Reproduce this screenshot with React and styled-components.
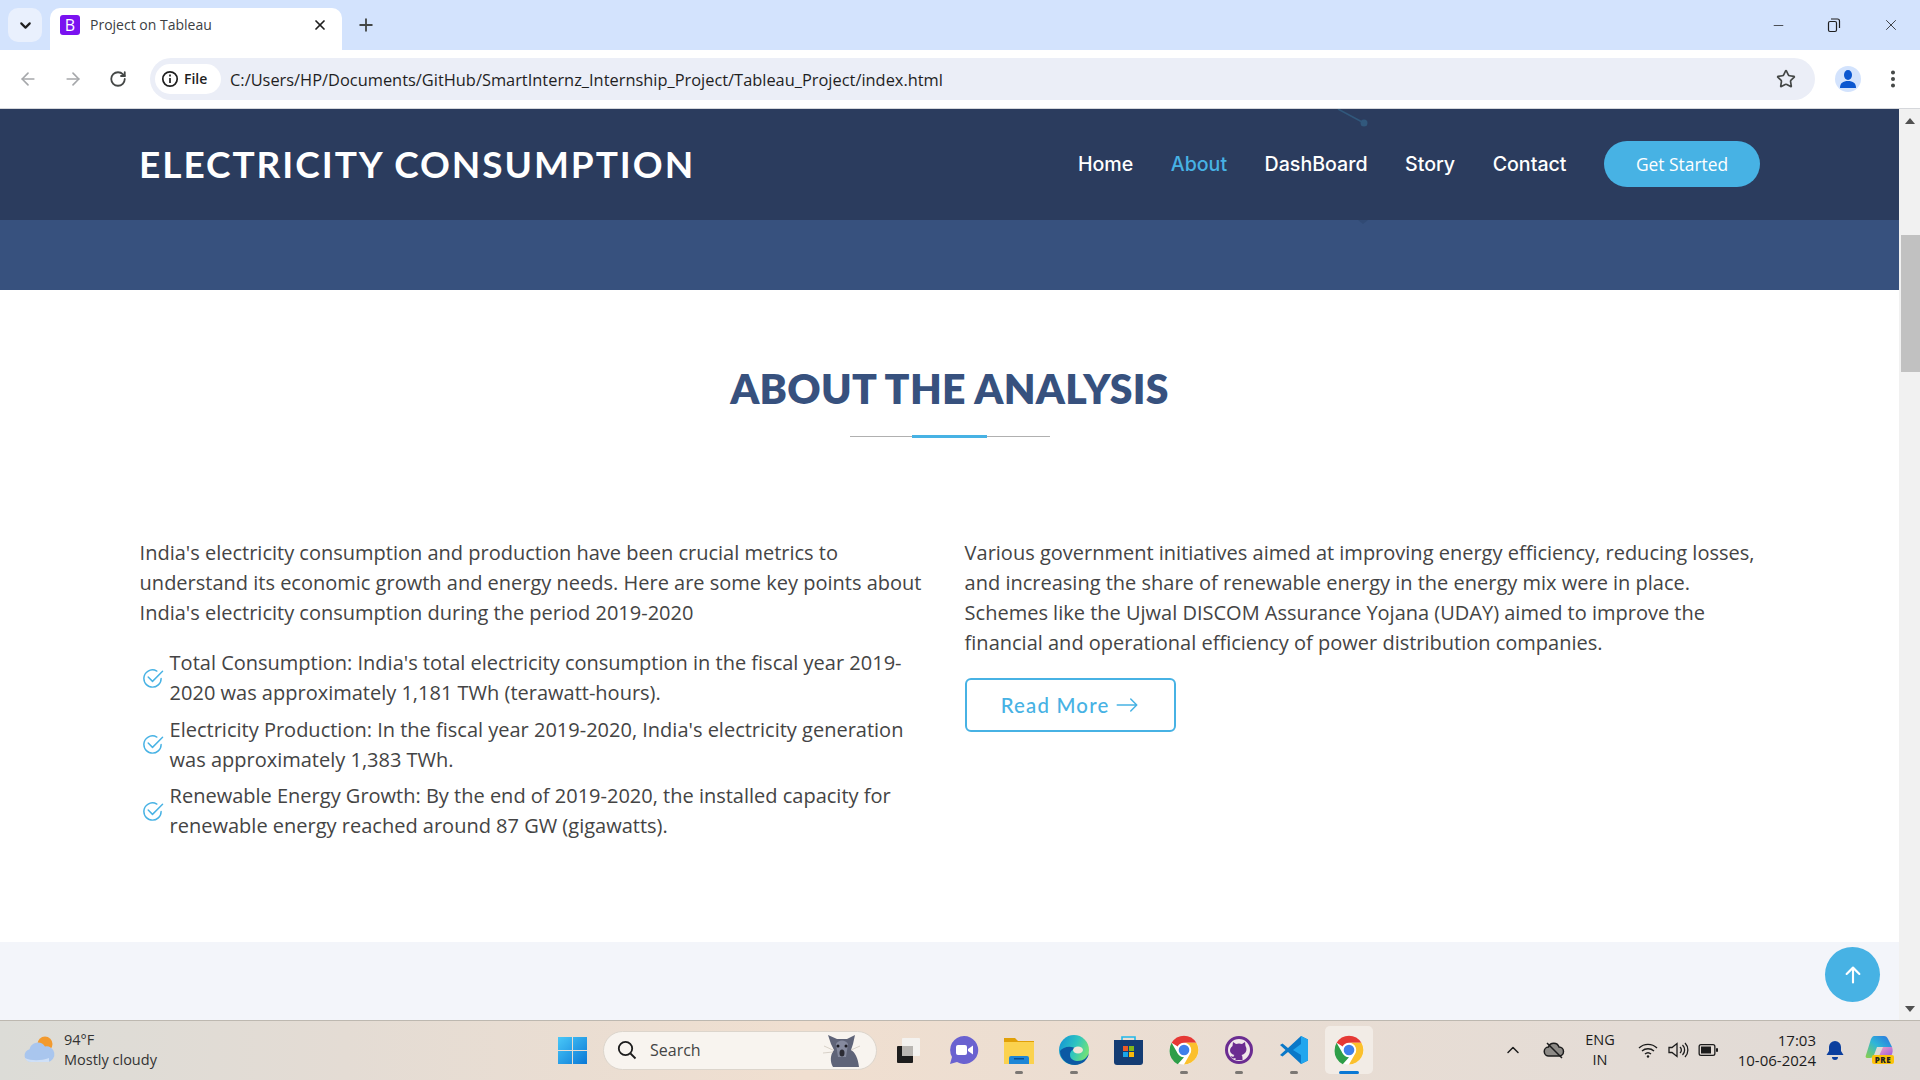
import React from "react";
import styled, { createGlobalStyle } from "styled-components";
import { BsArrowRight, BsArrowUpShort, BsCheck2Circle } from "react-icons/bs";
import { ArrowLeft, ArrowRight, ChevronDown, ChevronUp, EllipsisVertical, Minus, Plus, RotateCw, Star, X } from "lucide-react";

const GlobalStyle = createGlobalStyle`
  html, body { margin: 0; padding: 0; height: 100%; overflow: hidden; }
  body { font-family: "Open Sans", sans-serif; color: #444444; background: #fff; }
  * { box-sizing: border-box; }
`;

const Screen = styled.div`
  width: 1920px;
  height: 1080px;
  display: flex;
  flex-direction: column;
  overflow: hidden;
`;

/* browser chrome */
const TabStrip = styled.div`
  height: 50px;
  flex: none;
  background: #d3e3fd;
  display: flex;
  align-items: flex-end;
  padding-left: 8px;
`;
const TabMenu = styled.div`
  width: 34px;
  height: 34px;
  margin-bottom: 8px;
  border-radius: 10px;
  background: #e9f0fd;
  display: flex;
  align-items: center;
  justify-content: center;
  color: #1f1f1f;
`;
const Tab = styled.div`
  width: 292px;
  height: 42px;
  margin-left: 8px;
  background: #fff;
  border-radius: 10px 10px 0 0;
  display: flex;
  align-items: center;
  padding: 0 14px 9px 10px;
  font-size: 14px;
  color: #3c4043;
`;
const Favicon = styled.div`
  width: 20px;
  height: 20px;
  flex: none;
  border-radius: 3px;
  background: #7a12f0;
  color: #fff;
  font-size: 16px;
  line-height: 20px;
  text-align: center;
  margin-right: 10px;
`;
const TabTitle = styled.span`
  flex: 1;
`;
const NewTab = styled.div`
  margin: 0 0 12px 14px;
  height: 26px;
  display: flex;
  align-items: center;
  color: #444746;
`;
const WindowButtons = styled.div`
  margin-left: auto;
  height: 50px;
  display: flex;
  align-items: center;
  padding-right: 20px;
  gap: 41px;
  color: #1f1f1f;
`;
const Toolbar = styled.div`
  height: 59px;
  flex: none;
  background: #fff;
  border-bottom: 1px solid #d5d7db;
  display: flex;
  align-items: center;
  padding: 0 0 1px 18px;
  border-radius: 10px 10px 0 0;
`;
const NavIcon = styled.div`
  width: 20px;
  display: flex;
  justify-content: center;
  margin-right: ${(p) => p.$gap || 25}px;
  color: ${(p) => (p.$dim ? "#a6a8ab" : "#444746")};
`;
const AddressBar = styled.div`
  width: 1665px;
  height: 42px;
  margin-left: 4px;
  border-radius: 21px;
  background: #ebeef7;
  display: flex;
  align-items: center;
  padding: 0 19px 0 5px;
`;
const FileChip = styled.div`
  width: 66px;
  height: 30px;
  border-radius: 15px;
  background: #fff;
  display: flex;
  align-items: center;
  padding-left: 6px;
  gap: 5px;
  font-size: 14px;
  font-weight: 600;
  color: #1f1f1f;
`;
const Url = styled.span`
  margin-left: 9px;
  padding-top: 1px;
  flex: 1;
  font-size: 16.4px;
  color: #1f1f1f;
  white-space: nowrap;
`;
const Avatar = styled.div`
  width: 26px;
  height: 26px;
  margin-left: 20px;
  border-radius: 50%;
  background: #d3e3fd;
  display: flex;
  align-items: center;
  justify-content: center;
`;
const MenuDots = styled.div`
  margin-left: 21px;
  display: flex;
  color: #444746;
`;

/* page */
const Viewport = styled.div`
  flex: 1;
  min-height: 0;
  display: flex;
`;
const Page = styled.div`
  flex: 1;
  min-width: 0;
  display: flex;
  flex-direction: column;
  background: #fff;
`;
const Header = styled.header`
  position: relative;
  height: 111px;
  flex: none;
  background: #2b3c5e;
  display: flex;
  align-items: center;
  padding: 0 139px 2px;
`;
const Logo = styled.h1`
  margin: 0;
  font-family: "Lato", sans-serif;
  font-size: 37px;
  font-weight: 700;
  letter-spacing: 1.95px;
  color: #fff;
  white-space: nowrap;
`;
const NavLinks = styled.nav`
  margin-left: auto;
  display: flex;
  align-items: center;
  gap: 37.5px;
`;
const NavItem = styled.a`
  font-family: "Inter", sans-serif;
  font-size: 19.6px;
  font-weight: 500;
  color: ${(p) => (p.$active ? "#47b2e4" : "#fff")};
`;
const GetStarted = styled.a`
  width: 156px;
  height: 46px;
  border-radius: 23px;
  background: #47b2e4;
  color: #fff;
  font-size: 17.4px;
  font-weight: 500;
  display: flex;
  align-items: center;
  justify-content: center;
`;
const Decor = styled.svg`
  position: absolute;
  left: 1320px;
  top: 0;
  pointer-events: none;
`;
const HeroBand = styled.div`
  position: relative;
  height: 70px;
  flex: none;
  background: #37517e;
  &::before {
    content: "";
    position: absolute;
    left: 1358px;
    top: 0;
    border-left: 5px solid transparent;
    border-right: 5px solid transparent;
    border-top: 4px solid #314a74;
  }
`;
const About = styled.section`
  height: 652px;
  flex: none;
  padding: 64px 139px 0;
`;
const SectionTitle = styled.h2`
  margin: 0;
  text-align: center;
  font-family: "Lato", sans-serif;
  font-size: 41px;
  line-height: 70px;
  font-weight: 800;
  color: #37517e;
  text-transform: uppercase;
  letter-spacing: 0.3px;
`;
const TitleRule = styled.div`
  position: relative;
  width: 200px;
  height: 1px;
  margin: 12px auto 0;
  background: #b0b0b0;
  &::after {
    content: "";
    position: absolute;
    left: 62px;
    top: -1px;
    width: 75px;
    height: 3px;
    background: #47b2e4;
  }
`;
const Columns = styled.div`
  display: grid;
  grid-template-columns: 784px 796px;
  column-gap: 41px;
  margin-top: 101px;
  padding-left: 0.6px;
  font-size: 20px;
  line-height: 30px;
`;
const Para = styled.p`
  margin: 0;
`;
const CheckList = styled.ul`
  list-style: none;
  margin: 20px 0 0;
  padding: 0;
  display: flex;
  flex-direction: column;
  gap: 6.6px;
`;
const CheckItem = styled.li`
  display: flex;
  align-items: center;
  gap: 6px;
  padding-left: 1px;
  svg {
    flex: none;
    color: #47b2e4;
  }
`;
const ReadMore = styled.a`
  width: 211px;
  height: 54px;
  margin-top: 20px;
  border: 2px solid #47b2e4;
  border-radius: 6px;
  display: flex;
  align-items: center;
  justify-content: center;
  gap: 6px;
  color: #47b2e4;
  font-family: "Lato", sans-serif;
  font-size: 20.4px;
  font-weight: 500;
  letter-spacing: 1.2px;
`;
const GreySection = styled.div`
  position: relative;
  flex: 1;
  background: #f3f5fa;
`;
const ScrollTop = styled.a`
  position: absolute;
  right: 19px;
  top: 5px;
  width: 55px;
  height: 55px;
  border-radius: 50%;
  background: #47b2e4;
  color: #fff;
  display: flex;
  align-items: center;
  justify-content: center;
`;
const Scrollbar = styled.div`
  position: relative;
  width: 21px;
  flex: none;
  background: #f1f1f1;
  display: flex;
  flex-direction: column;
  align-items: center;
  justify-content: space-between;
  padding: 9px 0 8px;
`;
const ScrollArrow = styled.div`
  width: 0;
  height: 0;
  border-left: 5px solid transparent;
  border-right: 5px solid transparent;
  ${(p) => (p.$down ? "border-top: 6px solid #505050;" : "border-bottom: 6px solid #505050;")}
`;
const Thumb = styled.div`
  position: absolute;
  top: 126px;
  right: 0;
  width: 19px;
  height: 137px;
  background: #c1c1c1;
`;

/* taskbar */
const Taskbar = styled.div`
  height: 60px;
  flex: none;
  display: flex;
  align-items: center;
  padding-bottom: 1px;
  border-top: 1px solid #bdb8b0;
  background: linear-gradient(90deg, #dcdcd7 0%, #e4dcd4 18%, #f0dfd0 42%, #e9ddd3 65%, #e4dcd6 85%, #e0dad6 100%);
  color: #1c1c1c;
`;
const Weather = styled.div`
  width: 558px;
  flex: none;
  display: flex;
  align-items: center;
  padding-left: 23px;
  gap: 8px;
  font-size: 14.5px;
  line-height: 20px;
`;
const WeatherText = styled.div`
  color: #333;
`;
const StartIcon = styled.div`
  flex: none;
  width: 29px;
  display: flex;
`;
const SearchBox = styled.div`
  width: 274px;
  height: 39px;
  margin-left: 16px;
  flex: none;
  border-radius: 20px;
  background: #f8f4ef;
  border: 1px solid #dcd5cc;
  display: flex;
  align-items: center;
  padding: 0 14px 0 13px;
  gap: 13px;
  font-size: 16px;
  color: #444;
`;
const SearchLabel = styled.span`
  flex: 1;
`;
const Apps = styled.div`
  display: flex;
  align-items: center;
  margin-left: 4px;
`;
const AppSlot = styled.div`
  position: relative;
  width: ${(p) => (p.$active ? 48 : 55)}px;
  height: 48px;
  margin: 0 ${(p) => (p.$active ? 3.5 : 0)}px;
  display: flex;
  align-items: center;
  justify-content: center;
  border-radius: 5px;
  background: ${(p) => (p.$active ? "#f2ece6" : "transparent")};
  &::after {
    content: "";
    display: ${(p) => (p.$open || p.$active ? "block" : "none")};
    position: absolute;
    bottom: 0;
    left: 50%;
    transform: translateX(-50%);
    width: ${(p) => (p.$active ? 20 : 8)}px;
    height: 3px;
    border-radius: 2px;
    background: ${(p) => (p.$active ? "#0a78d4" : "#7b7773")};
  }
`;
const Tray = styled.div`
  margin-left: auto;
  display: flex;
  align-items: center;
  padding-right: 26px;
`;
const TrayIcon = styled.div`
  display: flex;
  margin-left: ${(p) => p.$gap || 0}px;
`;
const Lang = styled.div`
  width: 36px;
  margin-left: 17px;
  text-align: center;
  font-size: 14.5px;
  line-height: 20px;
`;
const Clock = styled.div`
  width: 84px;
  margin-left: 14px;
  text-align: right;
  font-size: 15px;
  line-height: 20px;
  white-space: nowrap;
`;

const ChromeLogo = ({ size = 30 }) => (
  <svg width={size} height={size} viewBox="0 0 48 48">
    <circle cx="24" cy="24" r="23" fill="#fff" />
    <path d="M24 1a23 23 0 0 1 19.9 11.5H24a11.5 11.5 0 0 0-10 5.8L4.1 12.5A23 23 0 0 1 24 1z" fill="#e53935" />
    <path d="M4.1 12.5 14 29.7a11.5 11.5 0 0 0 10 5.8L14 46.7A23 23 0 0 1 1 24a23 23 0 0 1 3.1-11.5z" fill="#2e9e48" />
    <path d="M43.9 12.5A23 23 0 0 1 24 47l10-17.3A11.5 11.5 0 0 0 24 12.5z" fill="#fbc02d" />
    <circle cx="24" cy="24" r="11" fill="#fff" />
    <circle cx="24" cy="24" r="8.5" fill="#3f80ea" />
  </svg>
);

const WindowsLogo = () => (
  <svg width="29" height="29" viewBox="0 0 29 29">
    <defs>
      <linearGradient id="winA" x1="0" y1="0" x2="1" y2="1">
        <stop offset="0" stopColor="#49c8f8" />
        <stop offset="1" stopColor="#0a78d6" />
      </linearGradient>
    </defs>
    <path d="M0 1h14v13H0zM15 1h14v13H15zM0 15h14v13H0zM15 15h14v13H15z" fill="url(#winA)" />
  </svg>
);

const WeatherIcon = () => (
  <svg width="33" height="28" viewBox="0 0 33 28">
    <circle cx="22" cy="8" r="7.5" fill="#f29a2e" />
    <path d="M8 26a6.500 6.500 0 0 1-1.500-12.800A8.500 8.500 0 0 1 22 10.500a7.500 7.500 0 0 1 3 15.500z" fill="#a9c6ee" />
    <path d="M2 22c6 3 16 3 24 0v4H8a7 7 0 0 1-6-4z" fill="#cfe0f7" />
  </svg>
);

const SearchMascot = () => (
  <svg width="40" height="36" viewBox="0 0 40 36">
    <path d="M6 3l9 4h10l8-4-2 9-2 6c4 2 7 8 8 17H11c-3-5-3-12 1-17l-3-6z" fill="#5f6478" />
    <path d="M14 12a7 7 0 0 1 12 0l-2 13h-8z" fill="#858a9e" />
    <circle cx="16" cy="14" r="1.5" fill="#1b1b22" />
    <circle cx="24" cy="14" r="1.5" fill="#1b1b22" />
    <ellipse cx="20" cy="21" rx="2.500" ry="3.500" fill="#2b2b33" />
    <path d="M2 14l9 4M1 21l10-1M38 14l-9 4" stroke="#cfc8be" strokeWidth="0.8" />
  </svg>
);

const TaskViewIcon = () => (
  <svg width="26" height="28" viewBox="0 0 26 28">
    <rect x="1" y="10" width="16" height="17" rx="1" fill="#1d1d1d" />
    <rect x="6" y="2" width="18" height="18" rx="1" fill="#f4f2ef" />
    <rect x="6" y="10" width="11" height="10" fill="#b9b6b2" />
  </svg>
);

const MeetIcon = () => (
  <svg width="30" height="30" viewBox="0 0 30 30">
    <path d="M15 1a14 14 0 1 1-7 26l-7 2 2-7A14 14 0 0 1 15 1z" fill="#6a62d0" />
    <rect x="7" y="10" width="11" height="10" rx="2" fill="#fff" />
    <path d="M19 14l5-3.500v9L19 16z" fill="#fff" />
  </svg>
);

const FolderIcon = () => (
  <svg width="32" height="28" viewBox="0 0 32 28">
    <path d="M1 2h11l3 3h16v4H1z" fill="#e1a008" />
    <rect x="1" y="6" width="30" height="22" fill="#fbd24e" />
    <path d="M6 28v-6a2 2 0 0 1 2-2h16a2 2 0 0 1 2 2v6z" fill="#1d86d6" />
    <rect x="11" y="22" width="10" height="1.500" fill="#0a4e91" />
  </svg>
);

const EdgeIcon = () => (
  <svg width="30" height="30" viewBox="0 0 30 30">
    <defs>
      <linearGradient id="edgeA" x1="0" y1="0" x2="1" y2="0.400">
        <stop offset="0" stopColor="#1091d8" />
        <stop offset="0.600" stopColor="#2ec5c0" />
        <stop offset="1" stopColor="#6ee07c" />
      </linearGradient>
    </defs>
    <circle cx="15" cy="15" r="15" fill="url(#edgeA)" />
    <path d="M30 18c-1 7-7 12-14 12-8 0-15-6-15-14 3-4 11-6 16-2-3 0-6 2-6 6 0 4 4 6 8 6 5 0 9-3 11-8z" fill="#0c59a4" />
    <ellipse cx="19" cy="15" rx="5" ry="3.500" fill="#f1e4d8" />
  </svg>
);

const StoreIcon = () => (
  <svg width="29" height="30" viewBox="0 0 29 30">
    <path d="M8 6V2h13v4" fill="none" stroke="#22b8ea" strokeWidth="1.600" />
    <path d="M0 5h29v22a3 3 0 0 1-3 3H3a3 3 0 0 1-3-3z" fill="#143c73" />
    <rect x="9" y="11" width="5" height="5" fill="#ee5a25" />
    <rect x="15" y="11" width="5" height="5" fill="#83b81a" />
    <rect x="9" y="17" width="5" height="5" fill="#1aa5e8" />
    <rect x="15" y="17" width="5" height="5" fill="#fbb80a" />
  </svg>
);

const GithubIcon = () => (
  <svg width="28" height="28" viewBox="0 0 28 28">
    <circle cx="14" cy="14" r="12.500" fill="#f0e7ea" stroke="#6b2c91" strokeWidth="3" />
    <path d="M8 6l3 2a9 9 0 0 1 6 0l3-2 .5 4c2 3 1 8-4 9 1 1 1 2 1 5h-7v-2c-3 1-4 0-5-2 1 0 2 1 3 1 0-1 0-1 1-2-5-1-6-6-2-9z" fill="#6b2c91" />
  </svg>
);

const VsCodeIcon = () => (
  <svg width="30" height="30" viewBox="0 0 30 30">
    <path d="M22 1l7 3.500v21L22 29 9 17l-5.500 4.500L1 20l5.500-5L1 10l2.500-1.500L9 13z" fill="#0a78c8" />
    <path d="M22 1l7 3.500v21L22 29V20l-8-5 8-6z" fill="#22a6ee" />
  </svg>
);

const CopilotIcon = () => (
  <svg width="29" height="30" viewBox="0 0 29 30">
    <defs>
      <linearGradient id="copA" x1="0" y1="1" x2="1" y2="0">
        <stop offset="0" stopColor="#8dd046" />
        <stop offset="0.500" stopColor="#2fb6d8" />
        <stop offset="1" stopColor="#2b6fe0" />
      </linearGradient>
      <linearGradient id="copB" x1="0" y1="0" x2="1" y2="1">
        <stop offset="0" stopColor="#f4a1c0" />
        <stop offset="1" stopColor="#9a5ce0" />
      </linearGradient>
    </defs>
    <path d="M9 1h10c2 0 3 1 4 3l4 8H12L9 20c-1 2-2 3-4 3H2c-1 0-2-1-1-3L6 4c1-2 2-3 3-3z" fill="url(#copA)" />
    <path d="M18 12h9c1 3 1 6-1 9H14z" fill="url(#copB)" />
    <rect x="7" y="20" width="22" height="9" rx="2" fill="#fbc30a" />
    <text x="18" y="27.500" fontSize="8" fontWeight="800" fontFamily="Open Sans" textAnchor="middle" letterSpacing="0.6" fill="#222">PRE</text>
  </svg>
);

const listItems = [
  "Total Consumption: India's total electricity consumption in the fiscal year 2019-2020 was approximately 1,181 TWh (terawatt-hours).",
  "Electricity Production: In the fiscal year 2019-2020, India's electricity generation was approximately 1,383 TWh.",
  "Renewable Energy Growth: By the end of 2019-2020, the installed capacity for renewable energy reached around 87 GW (gigawatts).",
];

export default function App() {
  return (
    <Screen>
      <GlobalStyle />
      <TabStrip>
        <TabMenu>
          <ChevronDown size={17} strokeWidth={3} />
        </TabMenu>
        <Tab>
          <Favicon>B</Favicon>
          <TabTitle>Project on Tableau</TabTitle>
          <X size={16} strokeWidth={2.6} color="#1f1f1f" />
        </Tab>
        <NewTab>
          <Plus size={20} strokeWidth={2.2} />
        </NewTab>
        <WindowButtons>
          <Minus size={15} strokeWidth={1.2} />
          <svg width="14" height="15" viewBox="0 0 14 15" fill="none" stroke="#1f1f1f" strokeWidth="1.200">
            <rect x="1.500" y="3.500" width="8" height="10" rx="1.500" />
            <path d="M4 1h6.500a2 2 0 0 1 2 2v7" />
          </svg>
          <X size={18} strokeWidth={1.1} />
        </WindowButtons>
      </TabStrip>
      <Toolbar>
        <NavIcon $dim>
          <ArrowLeft size={20} />
        </NavIcon>
        <NavIcon $dim>
          <ArrowRight size={20} />
        </NavIcon>
        <NavIcon $gap={18}>
          <RotateCw size={18} strokeWidth={2.4} />
        </NavIcon>
        <AddressBar>
          <FileChip>
            <svg width="18" height="18" viewBox="0 0 18 18" fill="none" stroke="#1f1f1f" strokeWidth="1.700">
              <circle cx="9" cy="9" r="7.200" />
              <path d="M9 8v5M9 4.600v1.800" />
            </svg>
            File
          </FileChip>
          <Url>C:/Users/HP/Documents/GitHub/SmartInternz_Internship_Project/Tableau_Project/index.html</Url>
          <Star size={20} strokeWidth={2} color="#444746" />
        </AddressBar>
        <Avatar>
          <svg width="18" height="20" viewBox="0 0 18 20" fill="#0b57d0">
            <ellipse cx="9" cy="6" rx="4" ry="5" />
            <path d="M1 19c0-5 3-7 8-7s8 2 8 7z" />
          </svg>
        </Avatar>
        <MenuDots>
          <EllipsisVertical size={22} strokeWidth={2.4} />
        </MenuDots>
      </Toolbar>

      <Viewport>
        <Page>
          <Header>
            <Logo>ELECTRICITY CONSUMPTION</Logo>
            <NavLinks>
              <NavItem>Home</NavItem>
              <NavItem $active>About</NavItem>
              <NavItem>DashBoard</NavItem>
              <NavItem>Story</NavItem>
              <NavItem>Contact</NavItem>
              <GetStarted>Get Started</GetStarted>
            </NavLinks>
            <Decor width="60" height="20" viewBox="0 0 60 20">
              <path d="M18 0L44 14" stroke="#31587c" strokeWidth="1.500" />
              <circle cx="44" cy="14" r="3.500" fill="#31587c" />
            </Decor>
          </Header>
          <HeroBand />
          <About>
            <SectionTitle>About the Analysis</SectionTitle>
            <TitleRule />
            <Columns>
              <div>
                <Para>
                  India's electricity consumption and production have been crucial metrics to understand its economic
                  growth and energy needs. Here are some key points about India's electricity consumption during the
                  period 2019-2020
                </Para>
                <CheckList>
                  {listItems.map((item) => (
                    <CheckItem key={item}>
                      <BsCheck2Circle size={23} />
                      <span>{item}</span>
                    </CheckItem>
                  ))}
                </CheckList>
              </div>
              <div>
                <Para>
                  Various government initiatives aimed at improving energy efficiency, reducing losses, and increasing
                  the share of renewable energy in the energy mix were in place. Schemes like the Ujwal DISCOM Assurance
                  Yojana (UDAY) aimed to improve the financial and operational efficiency of power distribution
                  companies.
                </Para>
                <ReadMore>
                  Read More
                  <BsArrowRight size={24} />
                </ReadMore>
              </div>
            </Columns>
          </About>
          <GreySection>
            <ScrollTop>
              <BsArrowUpShort size={34} />
            </ScrollTop>
          </GreySection>
        </Page>
        <Scrollbar>
          <ScrollArrow />
          <Thumb />
          <ScrollArrow $down />
        </Scrollbar>
      </Viewport>

      <Taskbar>
        <Weather>
          <WeatherIcon />
          <WeatherText>
            94°F
            <br />
            Mostly cloudy
          </WeatherText>
        </Weather>
        <StartIcon>
          <WindowsLogo />
        </StartIcon>
        <SearchBox>
          <svg width="20" height="20" viewBox="0 0 20 20" fill="none" stroke="#1c1c1c" strokeWidth="1.800">
            <circle cx="8.500" cy="8.500" r="6.700" />
            <path d="M13.500 13.500L18.500 18.500" />
          </svg>
          <SearchLabel>Search</SearchLabel>
          <SearchMascot />
        </SearchBox>
        <Apps>
          <AppSlot><TaskViewIcon /></AppSlot>
          <AppSlot><MeetIcon /></AppSlot>
          <AppSlot $open><FolderIcon /></AppSlot>
          <AppSlot $open><EdgeIcon /></AppSlot>
          <AppSlot><StoreIcon /></AppSlot>
          <AppSlot $open><ChromeLogo /></AppSlot>
          <AppSlot $open><GithubIcon /></AppSlot>
          <AppSlot $open><VsCodeIcon /></AppSlot>
          <AppSlot $active><ChromeLogo /></AppSlot>
        </Apps>
        <Tray>
          <TrayIcon>
            <ChevronUp size={20} strokeWidth={1.8} />
          </TrayIcon>
          <TrayIcon $gap={20}>
            <svg width="22" height="20" viewBox="0 0 22 20" fill="none" stroke="#1c1c1c" strokeWidth="1.500">
              <path d="M6 16a4.500 4.500 0 0 1-.5-9A5.500 5.500 0 0 1 16 7a4.500 4.500 0 0 1 0 9z" fill="#8d8a86" />
              <path d="M4 3l15 15" />
            </svg>
          </TrayIcon>
          <Lang>
            ENG
            <br />
            IN
          </Lang>
          <TrayIcon $gap={20}>
            <svg width="20" height="18" viewBox="0 0 20 18" fill="none" stroke="#1c1c1c" strokeWidth="1.400">
              <path d="M1 7a13 13 0 0 1 18 0M4 10a9 9 0 0 1 12 0M7 13a4.500 4.500 0 0 1 6 0" />
              <circle cx="10" cy="15.500" r="1.200" fill="#1c1c1c" stroke="none" />
            </svg>
          </TrayIcon>
          <TrayIcon $gap={10}>
            <svg width="21" height="18" viewBox="0 0 21 18" fill="none" stroke="#1c1c1c" strokeWidth="1.300">
              <path d="M1 6.500h3l5-4v13l-5-4H1z" />
              <path d="M12 6a4 4 0 0 1 0 6M14.500 4a7 7 0 0 1 0 10M17 2a10 10 0 0 1 0 14" />
            </svg>
          </TrayIcon>
          <TrayIcon $gap={9}>
            <svg width="20" height="14" viewBox="0 0 20 14" fill="#1c1c1c">
              <path fillRule="evenodd" d="M3 1h12a2.500 2.500 0 0 1 2.500 2.500v7A2.500 2.500 0 0 1 15 13H3a2.500 2.500 0 0 1-2.500-2.500v-7A2.500 2.500 0 0 1 3 1zm0 1.300a1.200 1.200 0 0 0-1.200 1.200v7A1.200 1.200 0 0 0 3 11.700h12a1.200 1.200 0 0 0 1.200-1.200v-7A1.200 1.200 0 0 0 15 2.300z" />
              <rect x="3" y="3.500" width="10" height="7" />
              <rect x="18" y="5" width="2" height="4" rx="1" />
            </svg>
          </TrayIcon>
          <Clock>
            17:03
            <br />
            10-06-2024
          </Clock>
          <TrayIcon $gap={10}>
            <svg width="18" height="20" viewBox="0 0 18 20" fill="#0c3f9e">
              <path d="M9 1a6 6 0 0 1 6 6v4l2.500 4h-17L3 11V7a6 6 0 0 1 6-6z" />
              <path d="M6 17h6a3 3 0 0 1-6 0z" />
            </svg>
          </TrayIcon>
          <TrayIcon $gap={21}>
            <CopilotIcon />
          </TrayIcon>
        </Tray>
      </Taskbar>
    </Screen>
  );
}
